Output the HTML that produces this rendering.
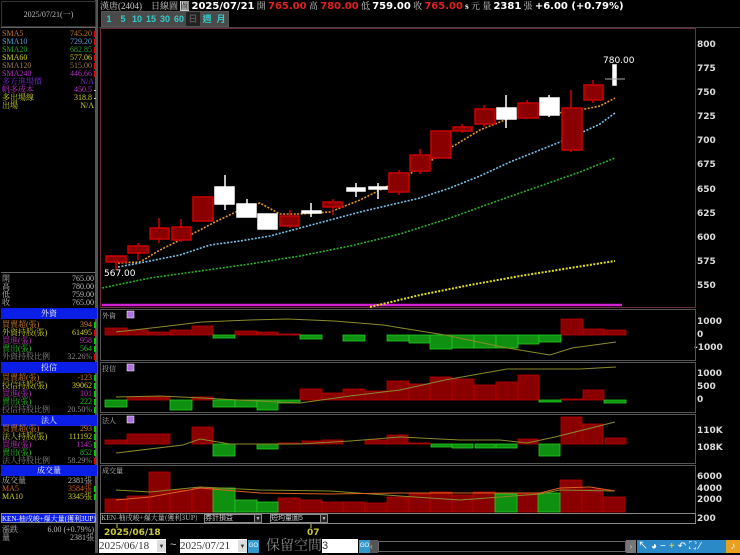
<!DOCTYPE html>
<html><head><meta charset="utf-8"><style>
*{margin:0;padding:0;box-sizing:border-box}
body{width:740px;height:553px;background:#000;overflow:hidden;position:relative;font-family:"Liberation Sans","Noto Sans CJK TC",sans-serif;color:#ccc}
.a{position:absolute;white-space:nowrap}
.lp{font-family:"Liberation Serif","Noto Serif CJK SC",serif;font-size:8px;line-height:10px}
.row{position:absolute;left:2px;width:94px;height:10px}
.row .r{position:absolute;right:4px}
.row .m{position:absolute;right:0;top:2px;width:2px;height:6px}
.hd{position:absolute;left:1px;width:96px;height:11px;background:#0a1ee6;color:#fff;text-align:center;font-size:8px;line-height:11px;font-family:"Noto Serif CJK SC",serif}
.ax{position:absolute;left:697px;font-size:9px;font-weight:bold;color:#ddd;font-family:"DejaVu Sans",sans-serif}
.btn{position:absolute;top:12px;width:14px;height:14px;background:#4a4a4a;color:#3cc;font-size:9px;font-weight:bold;text-align:center;line-height:14px}
</style></head><body>
<div class="a" style="left:0;top:0;width:98px;height:553px;background:#000;border-right:3px solid #555"></div>
<div class="a" style="left:1px;top:1px;width:95px;height:26px;border:1px solid #333;color:#bbb;font-size:8px;text-align:center;line-height:26px;font-family:'Liberation Serif','Noto Serif CJK SC',serif">2025/07/21(一)</div>
<div class="a" style="left:1px;top:27px;width:95px;height:1px;background:#666"></div>
<div class="lp">
<div class="row" style="top:29px;color:#c8782a">SMA5<span class="r">745.20</span><i class="m" style="background:#e00"></i></div>
<div class="row" style="top:37px;color:#5aa0d0">SMA10<span class="r">729.20</span><i class="m" style="background:#e00"></i></div>
<div class="row" style="top:45px;color:#2aa02a">SMA20<span class="r">682.85</span><i class="m" style="background:#e00"></i></div>
<div class="row" style="top:53px;color:#d0d02a">SMA60<span class="r">577.06</span><i class="m" style="background:#e00"></i></div>
<div class="row" style="top:61px;color:#a07a50">SMA120<span class="r">515.00</span><i class="m" style="background:#e00"></i></div>
<div class="row" style="top:69px;color:#b030c0">SMA240<span class="r">446.66</span><i class="m" style="background:#e00"></i></div>
<div class="row" style="top:77px;color:#7a2ad0">多方進場價<span class="r" style="right:2px">N/A</span></div>
<div class="row" style="top:85px;color:#c030c0">帆多成本<span class="r">450.5</span><i class="m" style="background:#ccc;height:1px;top:5px"></i></div>
<div class="row" style="top:93px;color:#d0d02a">多出場線<span class="r">318.8</span><i class="m" style="background:#ccc;height:1px;top:5px"></i></div>
<div class="row" style="top:101px;color:#d0d02a">出場<span class="r" style="right:2px">N/A</span></div>
<div class="a" style="left:1px;top:272px;width:95px;height:1px;background:#666"></div>
<div class="row" style="top:274px;color:#bbb">開<span class="r" style="right:2px">765.00</span></div>
<div class="row" style="top:282px;color:#bbb">高<span class="r" style="right:2px">780.00</span></div>
<div class="row" style="top:290px;color:#bbb">低<span class="r" style="right:2px">759.00</span></div>
<div class="row" style="top:298px;color:#bbb">收<span class="r" style="right:2px">765.00</span></div>
<div class="hd" style="top:308px">外資</div>
<div class="row" style="top:320px;color:#d08030">買賣超(張)<span class="r">394</span><i class="m" style="background:#0c0"></i></div>
<div class="row" style="top:328px;color:#d0d02a">外資持股(張)<span class="r">61495</span><i class="m" style="background:#e00"></i></div>
<div class="row" style="top:336px;color:#c030c0">買進(張)<span class="r">958</span><i class="m" style="background:#0c0"></i></div>
<div class="row" style="top:344px;color:#2ac02a">賣出(張)<span class="r">564</span><i class="m" style="background:#0c0"></i></div>
<div class="row" style="top:352px;color:#888">外資持股比例<span class="r">32.26%</span><i class="m" style="background:#e00"></i></div>
<div class="hd" style="top:362px">投信</div>
<div class="row" style="top:373px;color:#d08030">買賣超(張)<span class="r">-123</span><i class="m" style="background:#0c0"></i></div>
<div class="row" style="top:381px;color:#d0d02a">投信持股(張)<span class="r">39062</span><i class="m" style="background:#0c0"></i></div>
<div class="row" style="top:389px;color:#c030c0">買進(張)<span class="r">101</span><i class="m" style="background:#0c0"></i></div>
<div class="row" style="top:397px;color:#2ac02a">賣出(張)<span class="r">222</span><i class="m" style="background:#0c0"></i></div>
<div class="row" style="top:405px;color:#888">投信持股比例<span class="r">20.50%</span><i class="m" style="background:#0c0"></i></div>
<div class="hd" style="top:415px">法人</div>
<div class="row" style="top:424px;color:#d08030">買賣超(張)<span class="r">293</span><i class="m" style="background:#0c0"></i></div>
<div class="row" style="top:432px;color:#d0d02a">法人持股(張)<span class="r">111192</span><i class="m" style="background:#0c0"></i></div>
<div class="row" style="top:440px;color:#c030c0">買進(張)<span class="r">1145</span><i class="m" style="background:#0c0"></i></div>
<div class="row" style="top:448px;color:#2ac02a">賣出(張)<span class="r">852</span><i class="m" style="background:#0c0"></i></div>
<div class="row" style="top:456px;color:#888">法人持股比例<span class="r">58.29%</span><i class="m" style="background:#e00"></i></div>
<div class="hd" style="top:465px">成交量</div>
<div class="row" style="top:476px;color:#bbb">成交量<span class="r">2381張</span></div>
<div class="row" style="top:484px;color:#d0602a">MA5<span class="r">3584張</span><i class="m" style="background:#0c0"></i></div>
<div class="row" style="top:492px;color:#d0d02a">MA10<span class="r">3345張</span><i class="m" style="background:#0c0"></i></div>
<div class="a" style="left:1px;top:513px;width:95px;height:10px;background:#0a1ee6;color:#fff;font-size:7px;line-height:10px;border:1px solid #888">KEN-柚戌峻+爆大量(獲利3UP)</div>
<div class="row" style="top:525px;color:#bbb">漲跌<span class="r" style="right:2px">6.00 (+0.79%)</span></div>
<div class="row" style="top:533px;color:#bbb">量<span class="r" style="right:2px">2381張</span></div>
</div>
<div class="a" style="left:100px;top:0;font-size:9px;line-height:12px;color:#ccc;font-family:'Liberation Serif','Noto Serif CJK SC',serif">漢唐(2404)&nbsp;&nbsp;&nbsp;&nbsp;日線圖 <span style="background:#ccc;color:#000">圖</span> <b style="font-family:'DejaVu Sans';font-size:10px;color:#fff">2025/07/21</b> 開 <b style="font-family:'DejaVu Sans';font-size:10px;color:#e02020">765.00</b> 高 <b style="font-family:'DejaVu Sans';font-size:10px;color:#e02020">780.00</b> 低 <b style="font-family:'DejaVu Sans';font-size:10px;color:#fff">759.00</b> 收 <b style="font-family:'DejaVu Sans';font-size:10px;color:#e02020">765.00</b> <b style="color:#fff">s</b> 元 量 <b style="font-family:'DejaVu Sans';font-size:10px;color:#fff">2381</b> 張 <b style="font-family:'DejaVu Sans';font-size:10px;color:#fff">+6.00 (+0.79%)</b></div>
<div class="a" style="left:101px;top:11px;width:128px;height:16px;background:#555"></div>
<div class="btn" style="left:102px">1</div><div class="btn" style="left:116px">5</div><div class="btn" style="left:130px;width:14px">10</div><div class="btn" style="left:144px">15</div><div class="btn" style="left:158px">30</div><div class="btn" style="left:172px">60</div><div class="btn" style="left:186px;background:#222;color:#555">日</div><div class="btn" style="left:200px;color:#3cc">週</div><div class="btn" style="left:214px">月</div>
<div class="a" style="left:99px;top:27px;width:642px;height:1px;background:#444"></div>
<div class="ax" style="top:40px">800</div><div class="ax" style="top:64px">775</div><div class="ax" style="top:88px">750</div><div class="ax" style="top:112px">725</div><div class="ax" style="top:136px">700</div><div class="ax" style="top:160px">675</div><div class="ax" style="top:185px">650</div><div class="ax" style="top:209px">625</div><div class="ax" style="top:233px">600</div><div class="ax" style="top:257px">575</div><div class="ax" style="top:281px">550</div>
<div class="ax" style="top:317px">1000</div><div class="ax" style="top:330px">0</div><div class="ax" style="top:343px;left:694px">-1000</div>
<div class="ax" style="top:369px">1000</div><div class="ax" style="top:382px">500</div><div class="ax" style="top:395px">0</div>
<div class="ax" style="top:426px">110K</div><div class="ax" style="top:443px">108K</div>
<div class="ax" style="top:472px">6000</div><div class="ax" style="top:484px">4000</div><div class="ax" style="top:495px">2000</div><div class="ax" style="top:514px">200</div>
<svg class="a" style="left:0;top:0" width="740" height="553" viewBox="0 0 740 553">
<g fill="none">
<rect x="100.5" y="28.5" width="595" height="279" stroke="#6a2a3a"/>
<rect x="100.5" y="309.5" width="595" height="51" stroke="#555"/>
<rect x="100.5" y="362.5" width="595" height="50" stroke="#555"/>
<rect x="100.5" y="414.5" width="595" height="49" stroke="#555"/>
<rect x="100.5" y="465.5" width="595" height="48" stroke="#555"/>
<rect x="100.5" y="513.5" width="595" height="10" stroke="#888"/>
</g>
<line x1="102" y1="305" x2="622" y2="305" stroke="#d020d0" stroke-width="2.5"/>
<polyline fill="none" stroke="#e8962a" stroke-width="1.6" stroke-dasharray="2 1.5" points="118,263 140,262 160,250 180,240 200,230 215,222 240,210 260,203 280,214 300,214 330,212 360,200 390,185 420,168 450,148 480,130 510,118 540,114 570,112 600,106 615,98"/>
<polyline fill="none" stroke="#7ac0e8" stroke-width="1.6" stroke-dasharray="2 1.5" points="118,267 150,261 180,255 210,245 240,241 270,236 300,228 330,220 360,212 390,205 420,198 450,188 480,176 510,162 540,150 570,138 600,124 615,113"/>
<polyline fill="none" stroke="#2ab02a" stroke-width="1.6" stroke-dasharray="2 1.5" points="102,288 150,278 200,271 250,264 300,256 350,246 400,234 450,218 500,200 540,186 580,172 615,158"/>
<polyline fill="none" stroke="#e0e020" stroke-width="2" stroke-dasharray="2 1.5" points="370,307 420,295 470,285 520,276 570,268 615,261"/>
<g stroke-width="1.5">
<g fill="#8a0000" stroke="#c00">
<line x1="116" y1="256" x2="116" y2="270"/><rect x="106" y="256" width="20" height="6"/>
<line x1="138" y1="243" x2="138" y2="260"/><rect x="128" y="246" width="20" height="7"/>
<line x1="159" y1="218" x2="159" y2="243"/><rect x="150" y="228" width="19" height="11"/>
<line x1="181" y1="219" x2="181" y2="242"/><rect x="172" y="227" width="19" height="13"/>
<rect x="193" y="197" width="20" height="24"/>
<line x1="290" y1="210" x2="290" y2="228"/><rect x="280" y="216" width="19" height="10"/>
<line x1="333" y1="199" x2="333" y2="215"/><rect x="323" y="202" width="19" height="5"/>
<line x1="399" y1="170" x2="399" y2="195"/><rect x="389" y="173" width="20" height="19"/>
<line x1="420" y1="149" x2="420" y2="174"/><rect x="410" y="155" width="20" height="16"/>
<rect x="431" y="131" width="20" height="27"/>
<line x1="462" y1="124" x2="462" y2="133"/><rect x="453" y="127" width="19" height="4"/>
<line x1="484" y1="105" x2="484" y2="127"/><rect x="475" y="109" width="20" height="15"/>
<line x1="527" y1="100" x2="527" y2="118"/><rect x="518" y="103" width="20" height="15"/>
<line x1="571" y1="90" x2="571" y2="152"/><rect x="562" y="108" width="20" height="42"/>
<line x1="593" y1="80" x2="593" y2="103"/><rect x="584" y="85" width="19" height="15"/>
</g>
<g fill="#fff" stroke="#fff">
<line x1="225" y1="175" x2="225" y2="210"/><rect x="215" y="187" width="19" height="17"/>
<line x1="247" y1="199" x2="247" y2="217"/><rect x="237" y="204" width="19" height="13"/>
<rect x="258" y="214" width="19" height="15"/>
<line x1="311" y1="203" x2="311" y2="217"/><rect x="302" y="211" width="19" height="2"/>
<line x1="356" y1="183" x2="356" y2="197"/><rect x="347" y="188" width="18" height="3"/>
<line x1="378" y1="183" x2="378" y2="199"/><rect x="369" y="187" width="18" height="2"/>
<line x1="506" y1="95" x2="506" y2="128"/><rect x="497" y="108" width="19" height="11"/>
<line x1="549" y1="95" x2="549" y2="117"/><rect x="540" y="98" width="19" height="17"/>
<rect x="613" y="65" width="3" height="20"/>
</g>
<line x1="605" y1="79" x2="625" y2="79" stroke="#aaa" stroke-width="1"/>
</g>
<text x="603" y="63" fill="#fff" font-size="9" font-family="DejaVu Sans">780.00</text>
<text x="104" y="276" fill="#fff" font-size="9" font-family="DejaVu Sans">567.00</text>
<g font-size="7" fill="#bbb" font-family="Noto Serif CJK SC, serif"><text x="102" y="318">外資</text><text x="102" y="371">投信</text><text x="102" y="423">法人</text><text x="102" y="473">成交量</text></g>
<g fill="#b070e0" stroke="#fff" stroke-width=".5"><rect x="127" y="311" width="7" height="7"/><rect x="127" y="364" width="7" height="7"/><rect x="127" y="416" width="7" height="7"/></g>
<g stroke-width=".8">
<g fill="#8a0000" stroke="#b00">
<rect x="105" y="328" width="22" height="7"/><rect x="127" y="330" width="21" height="5"/><rect x="148" y="332" width="22" height="3"/><rect x="170" y="330" width="22" height="5"/><rect x="192" y="326" width="21" height="9"/><rect x="235" y="331" width="22" height="4"/><rect x="257" y="332" width="21" height="3"/><rect x="278" y="334" width="22" height="1"/><rect x="561" y="319" width="22" height="16"/><rect x="583" y="329" width="21" height="6"/><rect x="604" y="330" width="22" height="5"/>
</g>
<g fill="#109010" stroke="#2c2">
<rect x="213" y="335" width="22" height="3"/><rect x="300" y="335" width="22" height="4"/><rect x="343" y="335" width="22" height="6"/><rect x="387" y="335" width="22" height="6"/><rect x="409" y="335" width="21" height="8"/><rect x="430" y="335" width="22" height="14"/><rect x="452" y="335" width="22" height="13"/><rect x="474" y="335" width="22" height="13"/><rect x="496" y="335" width="22" height="13"/><rect x="518" y="335" width="21" height="9"/><rect x="539" y="335" width="22" height="7"/>
</g>
<g fill="#8a0000" stroke="#b00">
<rect x="127" y="397" width="21" height="3"/><rect x="148" y="397" width="22" height="3"/><rect x="192" y="397" width="21" height="3"/><rect x="300" y="389" width="22" height="11"/><rect x="322" y="393" width="21" height="7"/><rect x="343" y="389" width="22" height="11"/><rect x="365" y="391" width="22" height="9"/><rect x="387" y="381" width="22" height="19"/><rect x="409" y="384" width="21" height="16"/><rect x="430" y="377" width="22" height="23"/><rect x="452" y="379" width="22" height="21"/><rect x="474" y="385" width="22" height="15"/><rect x="496" y="382" width="22" height="18"/><rect x="518" y="375" width="21" height="25"/><rect x="561" y="399" width="22" height="1"/><rect x="583" y="390" width="21" height="10"/>
</g>
<g fill="#109010" stroke="#2c2">
<rect x="105" y="400" width="22" height="7"/><rect x="170" y="400" width="22" height="10"/><rect x="213" y="400" width="22" height="7"/><rect x="235" y="400" width="22" height="7"/><rect x="257" y="400" width="21" height="10"/><rect x="278" y="400" width="22" height="3"/><rect x="539" y="400" width="22" height="2"/><rect x="604" y="400" width="22" height="3"/>
</g>
<g fill="#8a0000" stroke="#b00">
<rect x="105" y="440" width="22" height="4"/><rect x="127" y="434" width="43" height="10"/><rect x="192" y="427" width="21" height="17"/><rect x="278" y="443" width="22" height="1"/><rect x="302" y="441" width="20" height="3"/><rect x="322" y="440" width="21" height="4"/><rect x="365" y="440" width="22" height="4"/><rect x="387" y="435" width="21" height="9"/><rect x="408" y="443" width="22" height="1"/><rect x="518" y="439" width="20" height="5"/><rect x="561" y="417" width="21" height="27"/><rect x="583" y="424" width="20" height="20"/><rect x="605" y="438" width="21" height="6"/>
</g>
<g fill="#109010" stroke="#2c2">
<rect x="213" y="444" width="22" height="12"/><rect x="257" y="444" width="21" height="5"/><rect x="431" y="444" width="21" height="3"/><rect x="452" y="444" width="21" height="4"/><rect x="475" y="444" width="20" height="4"/><rect x="496" y="444" width="21" height="4"/><rect x="539" y="444" width="21" height="12"/>
</g>
<g fill="#8a0000" stroke="#b00">
<rect x="105" y="499" width="22" height="13"/><rect x="127" y="496" width="22" height="16"/><rect x="149" y="472" width="21" height="40"/><rect x="170" y="490" width="22" height="22"/><rect x="192" y="488" width="21" height="24"/><rect x="278" y="498" width="22" height="14"/><rect x="300" y="500" width="22" height="12"/><rect x="322" y="502" width="21" height="10"/><rect x="343" y="502" width="22" height="10"/><rect x="365" y="503" width="22" height="9"/><rect x="387" y="497" width="22" height="15"/><rect x="409" y="494" width="21" height="18"/><rect x="430" y="492" width="22" height="20"/><rect x="452" y="495" width="21" height="17"/><rect x="473" y="492" width="22" height="20"/><rect x="517" y="494" width="21" height="18"/><rect x="560" y="480" width="22" height="32"/><rect x="582" y="489" width="21" height="23"/><rect x="603" y="497" width="22" height="15"/>
</g>
<g fill="#109010" stroke="#2c2">
<rect x="213" y="488" width="22" height="24"/><rect x="235" y="500" width="22" height="12"/><rect x="257" y="502" width="21" height="10"/><rect x="495" y="494" width="22" height="18"/><rect x="538" y="493" width="22" height="19"/>
</g>
</g>
<g fill="none" stroke-width="1">
<polyline stroke="#8a8a2a" points="116,332 160,327 202,322 250,320 288,319 334,321 383,325 445,335 507,348 550,355 572,348 616,342"/>
<polyline stroke="#8a8a2a" points="116,397 160,396 202,398 257,401 300,403 350,396 400,390 445,380 507,369 525,369 580,369 616,367"/>
<polyline stroke="#8a8a2a" points="116,453 183,445 200,439 230,444 300,444 350,441 400,437 460,440 500,440 527,443 555,437 615,422"/>
<polyline stroke="#8a8a2a" points="116,490 150,492 200,487 260,490 330,491 400,496 460,500 540,494 560,490 615,491"/>
<polyline stroke="#e06020" points="116,500 150,497 200,488 260,493 330,494 400,493 460,493 540,493 560,488 590,487 615,491"/>
</g>
<text x="104" y="535" fill="#c8c83a" font-size="9" font-family="DejaVu Sans" font-weight="bold">2025/06/18</text>
<line x1="117" y1="524" x2="117" y2="528" stroke="#c8c83a"/>
<text x="307" y="535" fill="#c8c83a" font-size="9" font-family="DejaVu Sans" font-weight="bold">07</text>
<line x1="311" y1="524" x2="311" y2="528" stroke="#c8c83a"/>
</svg>
<div class="a" style="left:101px;top:514px;width:102px;height:9px;font-size:7px;line-height:9px;color:#ccc;font-family:'Noto Serif CJK SC',serif">KEN-柚戌峻+爆大量(獲利3UP)</div>
<div class="a" style="left:204px;top:514px;width:58px;height:9px;border:1px solid #888;font-size:7px;line-height:8px;color:#ccc">券計損益<span style="position:absolute;right:0;top:0;width:7px;height:7px;background:#222;border-left:1px solid #888;font-size:5px;text-align:center">▼</span></div>
<div class="a" style="left:270px;top:514px;width:58px;height:9px;border:1px solid #888;font-size:7px;line-height:8px;color:#ccc">短均量圖5<span style="position:absolute;right:0;top:0;width:7px;height:7px;background:#222;border-left:1px solid #888;font-size:5px;text-align:center">▼</span></div>
<div class="a" style="left:99px;top:539px;width:67px;height:14px;background:#fff;color:#333;font-size:11px;line-height:14px;font-family:'Liberation Serif',serif">2025/06/18<span style="position:absolute;right:0;top:1px;width:9px;height:12px;background:#ddd;font-size:6px;text-align:center">▼</span></div>
<div class="a" style="left:170px;top:539px;color:#ccc;font-size:11px">~</div>
<div class="a" style="left:180px;top:539px;width:67px;height:14px;background:#fff;color:#333;font-size:11px;line-height:14px;font-family:'Liberation Serif',serif">2025/07/21<span style="position:absolute;right:0;top:1px;width:9px;height:12px;background:#ddd;font-size:6px;text-align:center">▼</span></div>
<div class="a" style="left:248px;top:540px;width:11px;height:13px;background:#39c;color:#fff;font-size:6px;line-height:13px;text-align:center">GO</div>
<div class="a" style="left:266px;top:537px;color:#888;font-size:14px;line-height:16px;font-family:'Noto Serif CJK SC',serif">保留空間</div>
<div class="a" style="left:322px;top:539px;width:36px;height:14px;background:#fff;color:#333;font-size:11px;line-height:14px">3</div>
<div class="a" style="left:359px;top:540px;width:11px;height:13px;background:#39c;color:#fff;font-size:6px;line-height:13px;text-align:center">GO</div>
<div class="a" style="left:370px;top:540px;width:8px;height:13px;background:#555;color:#ccc;font-size:8px;line-height:13px">‹</div>
<div class="a" style="left:378px;top:541px;width:248px;height:11px;background:#000;border:1px solid #666"></div>
<div class="a" style="left:626px;top:540px;width:10px;height:13px;background:#777;color:#ccc;font-size:8px;line-height:13px;text-align:center">›</div>
<div class="a" style="left:637px;top:540px;width:103px;height:13px;background:#2a8ac8"></div>
<div class="a" style="left:638px;top:540px;font-size:10px;line-height:13px;color:#fff;letter-spacing:3px">↖◕−<span style="color:#fd3">+</span>↶⛶⁄</div>
<div class="a" style="left:726px;top:540px;width:14px;height:13px;background:#e8a020;color:#fff;font-size:10px;line-height:13px;text-align:center">♪</div>
</body></html>
